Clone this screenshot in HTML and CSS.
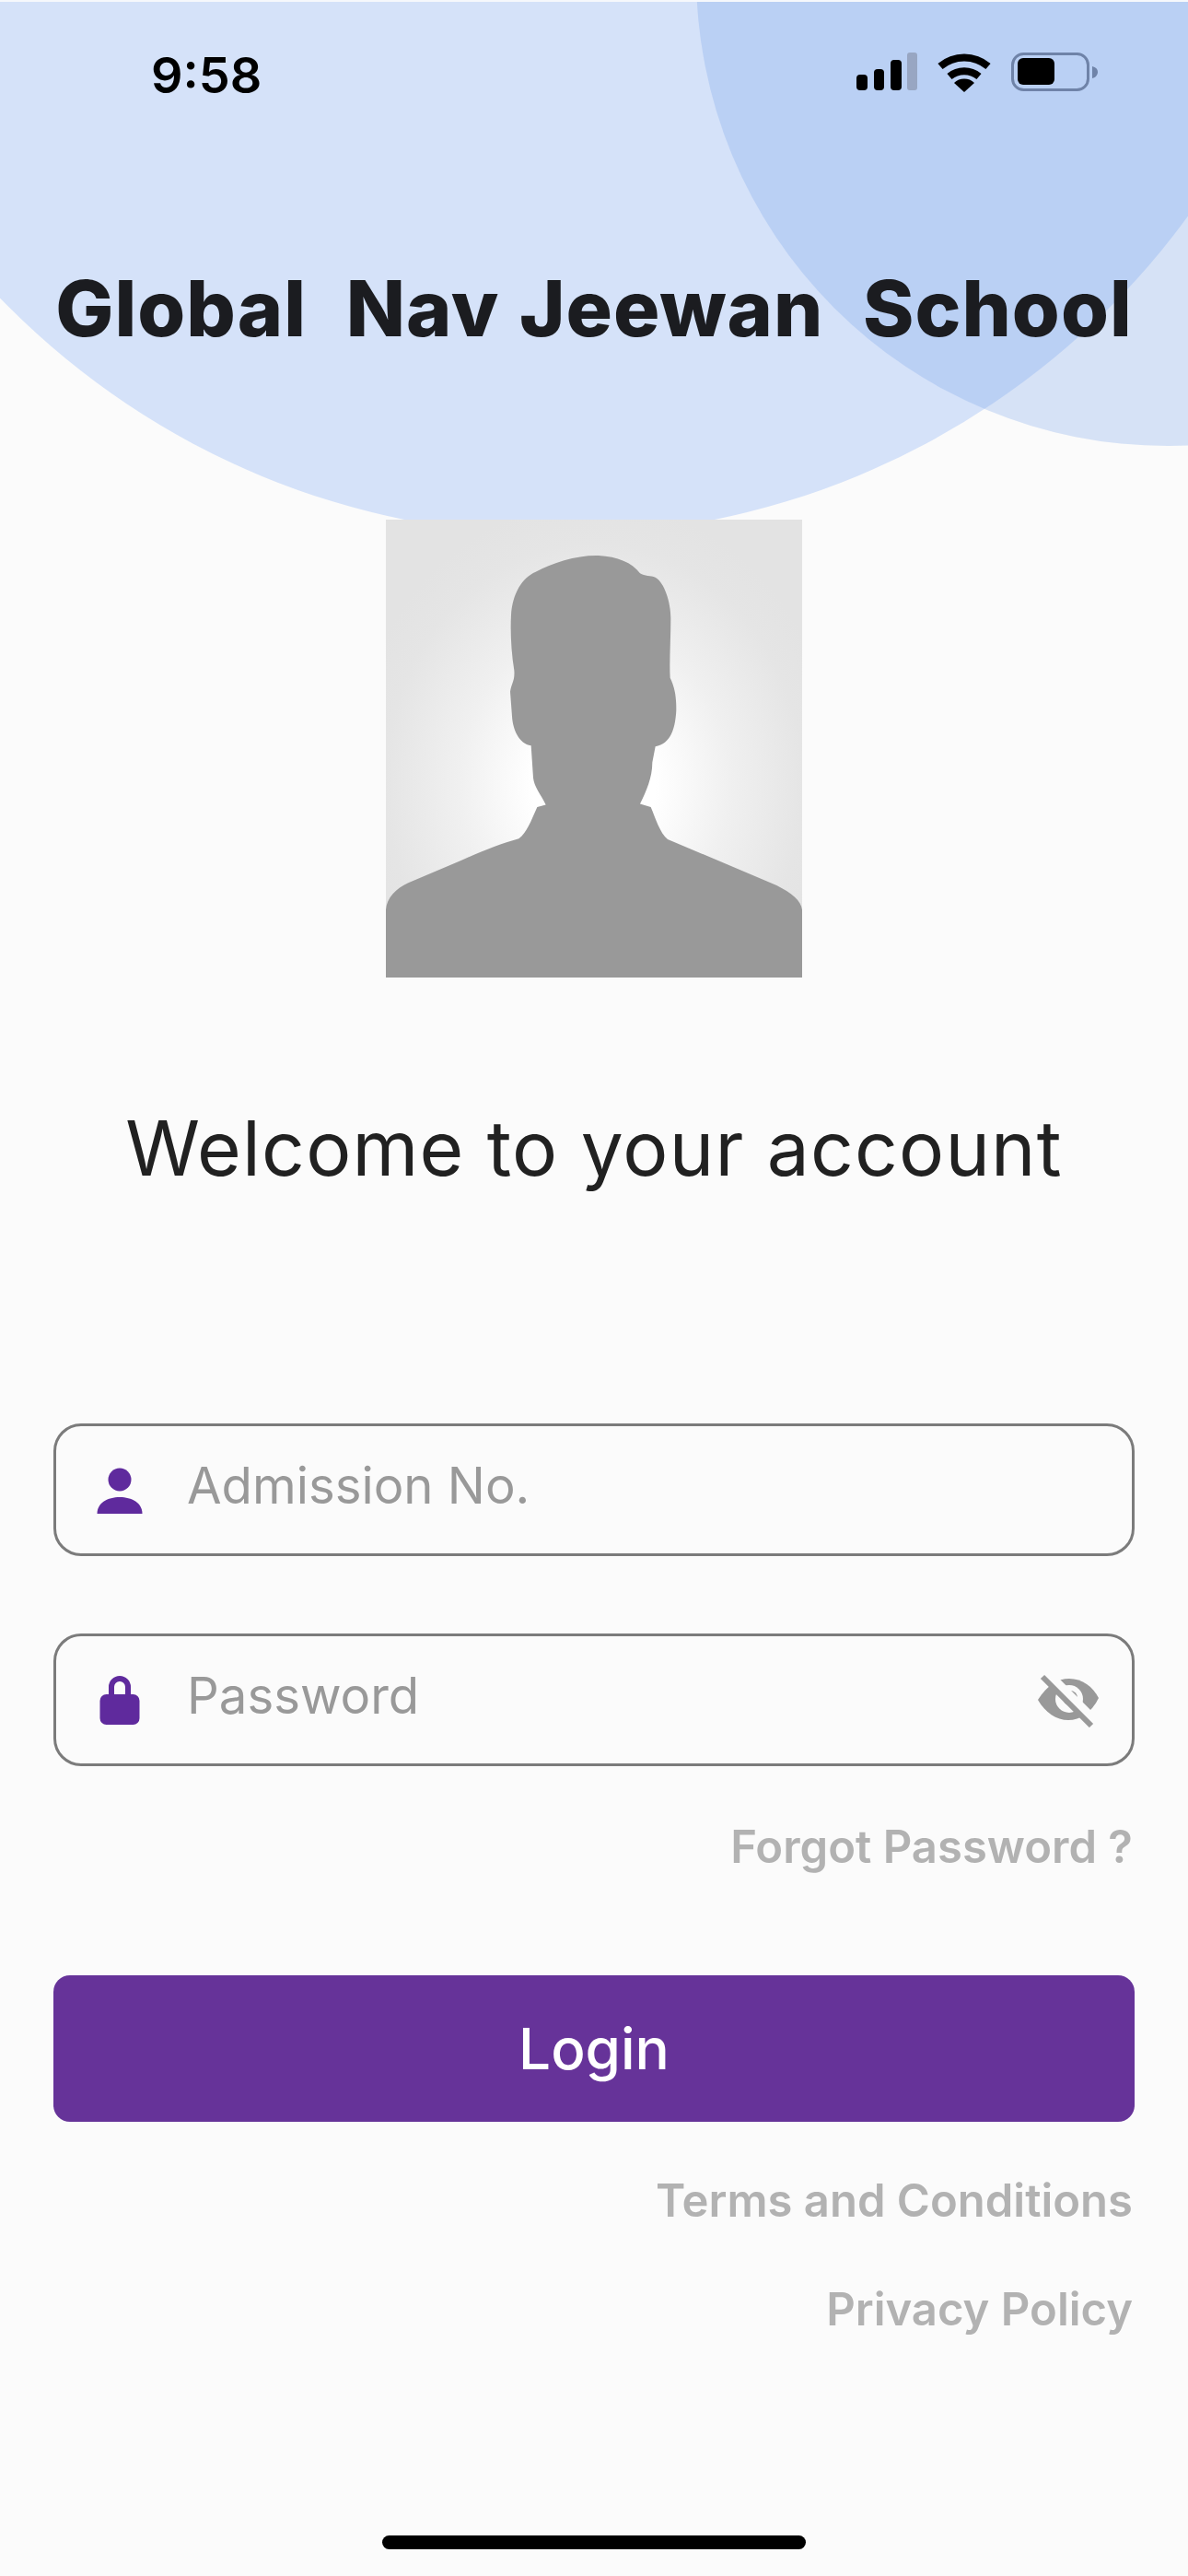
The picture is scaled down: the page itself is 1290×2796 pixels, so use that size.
FILE: index.html
```html
<!DOCTYPE html>
<html lang="en">
<head>
    <meta charset="UTF-8">
    <meta name="viewport" content="width=device-width, initial-scale=1.0">
    <title>Global Nav Jeewan School</title>
    <link rel="stylesheet" href="styles.css">
</head>
<body>
    <div class="screen">
        <div class="circle circle-big"></div>
        <div class="circle circle-small"></div>

        <div class="status-bar">
            <span class="time">9:58</span>
            <div class="status-icons">
                <svg class="signal" width="66" height="41" viewBox="0 0 66 41">
                    <rect x="0" y="24" width="12" height="17" rx="4" fill="#000"/>
                    <rect x="19" y="18" width="11" height="23" rx="4" fill="#000"/>
                    <rect x="37" y="8" width="12" height="33" rx="4" fill="#000"/>
                    <rect x="55" y="0" width="11" height="41" rx="3" fill="#98a6c2"/>
                </svg>
                <svg class="wifi" width="58" height="43" viewBox="0 0 58 43">
                    <path d="M3 15 A40 40 0 0 1 55 15" fill="none" stroke="#000" stroke-width="8"/>
                    <path d="M13 26 A25 25 0 0 1 45 26" fill="none" stroke="#000" stroke-width="8"/>
                    <path d="M29 43 L18 33 A16 16 0 0 1 40 33 Z" fill="#000"/>
                </svg>
                <svg class="battery" width="94" height="42" viewBox="0 0 94 42">
                    <rect x="1.5" y="1.5" width="82" height="39" rx="12" fill="none" stroke="#6f83a8" stroke-width="3"/>
                    <rect x="7" y="6" width="40" height="29" rx="6" fill="#000"/>
                    <path d="M88 15 C92 16 94 18 94 21 C94 24 92 27 88 28 Z" fill="#6f83a8"/>
                </svg>
            </div>
        </div>

        <h1 class="school-name">Global  Nav Jeewan  School</h1>

        <svg class="avatar" width="452" height="497" viewBox="57 40 1356 1490" preserveAspectRatio="none">
            <defs>
                <radialGradient id="avatarGlow" gradientUnits="userSpaceOnUse" cx="735" cy="900" r="800" gradientTransform="translate(735 900) scale(1 1.15) translate(-735 -900)">
                    <stop offset="0.25" stop-color="#ffffff"/>
                    <stop offset="0.55" stop-color="#f0f0f0"/>
                    <stop offset="0.85" stop-color="#e5e5e5"/>
                    <stop offset="1" stop-color="#e3e3e3"/>
                </radialGradient>
            </defs>
            <rect x="57" y="40" width="1356" height="1490" fill="url(#avatarGlow)"/>
            <path fill="#999999" d="M57 1530 L57 1310 C60 1270 90 1240 130 1222 L300 1150 C370 1118 430 1095 490 1078 C515 1060 530 1020 550 975 L578 968 C560 930 540 910 537 880 L530 775 C490 770 470 720 468 680 L462 600 C465 575 478 565 475 530 C465 470 462 400 465 350 C470 280 500 230 545 210 C600 180 680 155 750 157 C810 160 860 180 885 215 C900 225 920 222 935 228 C965 245 985 310 985 360 C985 430 980 500 983 555 C1000 590 1003 620 1003 660 C1000 720 985 770 935 778 L925 830 C925 880 905 925 885 965 L920 975 C935 1010 950 1060 975 1080 L1330 1230 C1380 1255 1410 1280 1413 1310 L1413 1530 Z"/>
        </svg>

        <h2 class="welcome">Welcome to your account</h2>

        <div class="login-form">
            <label class="field">
                <svg class="field-icon" width="60" height="60" viewBox="0 0 60 60">
                    <circle cx="30" cy="17" r="12.5" fill="#5f2a9d"/>
                    <path d="M5.5 54 C5.5 42 17 36 30 36 C43 36 54.5 42 54.5 54 Z" fill="#5f2a9d"/>
                </svg>
                <span class="placeholder">Admission No.</span>
            </label>

            <label class="field">
                <svg class="field-icon" width="60" height="60" viewBox="0 0 60 60">
                    <path d="M21 26 V14 A9 9 0 0 1 39 14 V26" fill="none" stroke="#5f2a9d" stroke-width="6"/>
                    <rect x="8.5" y="22" width="43" height="33" rx="7" fill="#5f2a9d"/>
                </svg>
                <span class="placeholder">Password</span>
                <svg class="eye-icon" width="70" height="60" viewBox="0 0 70 60">
                    <path d="M2 30 C12 14 24 7 36 7 C50 7 62 16 68 28 C60 44 48 52 35 52 C22 52 10 44 2 30 Z" fill="#999"/>
                    <circle cx="36" cy="29" r="15" fill="#fbfbfb"/>
                    <circle cx="37" cy="28" r="8" fill="#999"/>
                    <path d="M11 2 L64 55" stroke="#fbfbfb" stroke-width="13"/>
                    <path d="M7 5 L60 58" stroke="#999" stroke-width="6"/>
                </svg>
            </label>

            <div class="link-row forgot">Forgot Password ?</div>

            <button class="login-btn">Login</button>

            <div class="link-row terms">Terms and Conditions</div>
            <div class="link-row privacy">Privacy Policy</div>
        </div>

        <div class="home-bar"></div>
    </div>
</body>
</html>
```

FILE: styles.css
```css
* { box-sizing: border-box; }
html, body { margin: 0; padding: 0; }
body { width: 1290px; height: 2796px; background: #fbfbfb; font-family: 'Inter', 'Liberation Sans', sans-serif; }

.screen { position: relative; width: 1290px; height: 2796px; border-top: 2px solid #f6f8fc; overflow: hidden; background: #fbfbfb; display: flex; flex-direction: column; align-items: center; }

/* Background circles */
.circle { position: absolute; border-radius: 50%; }
.circle-big { left: -238px; top: -1112px; width: 1691px; height: 1691px; background: #d5e2f9; }
.circle-small { left: 756px; top: -541px; width: 1023px; height: 1023px; background: rgba(120, 160, 235, 0.28); }

/* Status bar */
.status-bar { position: relative; width: 100%; height: 110px; padding: 55px 98px 0 164px; display: flex; justify-content: space-between; align-items: flex-start; }
.time { font-size: 54px; font-weight: 600; line-height: 50px; color: #000; }
.status-icons { display: flex; align-items: flex-start; gap: 22px; }

/* Title */
.school-name { position: relative; margin: 173px 0 0; height: 100px; font-size: 84px; line-height: 100px; font-weight: 800; letter-spacing: 1px; word-spacing: 2px; color: #1b1c20; white-space: pre; text-align: center; }

.avatar { position: relative; display: block; margin-top: 179px; }

.welcome { margin: 136px 0 0; font-size: 82px; line-height: 100px; font-weight: 400; color: #212121; letter-spacing: 1.2px; }

/* Form */
.login-form { width: 1174px; margin-top: 248px; display: flex; flex-direction: column; }

.field { height: 144px; border: 3px solid #7b7b7b; border-radius: 30px; display: flex; align-items: center; padding-left: 39px; margin-bottom: 84px; }
.field-icon { flex: none; margin: 3px 43px 0 0; }
.placeholder { flex: 1; font-size: 54.5px; line-height: 60px; color: #999; padding-bottom: 10px; }
.eye-icon { flex: none; margin-right: 34px; }

.link-row { text-align: right; font-size: 49px; line-height: 56px; font-weight: 600; color: #b2b2b2; padding-right: 2px; }
.forgot { margin-top: -24px; }
.terms { margin-top: 58px; }
.privacy { margin-top: 62px; }

.login-btn { width: 100%; height: 159px; margin-top: 111px; border: none; border-radius: 18px; background-color: #663399; color: white; font-family: inherit; font-size: 62px; font-weight: 500; }

.home-bar { position: absolute; left: 415px; top: 2750px; width: 460px; height: 15px; border-radius: 8px; background: #000; }
```
